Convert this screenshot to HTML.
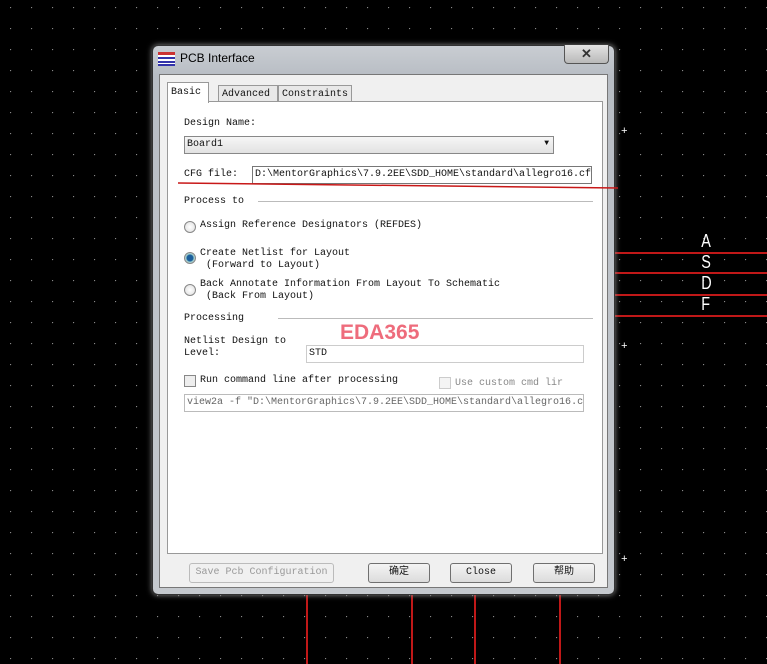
<!DOCTYPE html>
<html><head><meta charset="utf-8"><style>
*{box-sizing:border-box;margin:0;padding:0}
body{width:767px;height:664px;overflow:hidden;background:#000;position:relative;font-family:"Liberation Mono","Noto Sans CJK SC",monospace;font-size:10px;color:#111}
.grid{position:absolute;inset:0;background-image:radial-gradient(circle at 0.5px 0.5px,#888 0.5px,transparent 0.9px);background-size:21px 21px;background-position:10px 7px}
.abs{position:absolute}
.hr{position:absolute;height:2px;background:#c01818}
.vr{position:absolute;width:2px;background:#c01818}
.win{position:absolute;left:152px;top:45px;width:463px;height:550px;background:linear-gradient(#c9cdd2,#b8bdc4 30px,#c5c9ce);border:1px solid #333;border-radius:6px;box-shadow:0 0 6px #888}
.client{position:absolute;left:6px;top:28px;width:449px;height:514px;background:#f0f0f0;border:1px solid #777}
.panel{position:absolute;left:7px;top:26px;width:436px;height:453px;background:#fff;border:1px solid #999}
.tab{position:absolute;background:#e8e8e8;border:1px solid #999;border-bottom:none;height:17px;padding:3px 3px 0;font-size:10px;white-space:nowrap}
.lbl{position:absolute;font-size:10px;white-space:nowrap}
.inp{position:absolute;background:#fff;border:1px solid #aaa;font-size:10px;padding:2px 2px;white-space:nowrap;overflow:hidden;height:18px}
.sep{position:absolute;height:1px;background:#bbb}
.radio{position:absolute;width:12px;height:12px;border-radius:50%;border:1px solid #888;background:radial-gradient(circle,#fff,#ddd)}
.chk{position:absolute;width:12px;height:12px;border:1px solid #888;background:#eee}
.btn{position:absolute;height:20px;border:1px solid #707070;border-radius:3px;background:linear-gradient(#f4f4f4,#dcdcdc);text-align:center;line-height:18px;font-size:10px;white-space:nowrap}
</style></head><body>
<div class="grid"></div>
<div class="hr" style="left:615px;top:252px;width:152px"></div>
<div class="hr" style="left:615px;top:272px;width:152px"></div>
<div class="hr" style="left:615px;top:294px;width:152px"></div>
<div class="hr" style="left:615px;top:315px;width:152px"></div>
<div class="abs" style="left:700px;top:231px;color:#fff;font-family:'Liberation Sans',sans-serif;font-size:18px;line-height:21px;transform:scaleX(.8)">A<br>S<br>D<br>F</div>
<div class="vr" style="left:306px;top:595px;height:69px"></div>
<div class="vr" style="left:411px;top:595px;height:69px"></div>
<div class="vr" style="left:474px;top:595px;height:69px"></div>
<div class="vr" style="left:559px;top:595px;height:69px"></div>
<div class="abs" style="left:621px;top:126px;color:#fff;font-size:11px">+</div>
<div class="abs" style="left:621px;top:341px;color:#fff;font-size:11px">+</div>
<div class="abs" style="left:621px;top:554px;color:#fff;font-size:11px">+</div>
<div class="win">
 <div class="abs" style="left:5px;top:6px;width:17px;height:14px;background:linear-gradient(#c33 0 3px,#fff 3px 5px,#33a 5px 7px,#fff 7px 9px,#33a 9px 11px,#fff 11px 12px,#33a 12px)"></div>
 <div class="abs" style="left:27px;top:5px;font-family:'Liberation Sans',sans-serif;font-size:12px;color:#000">PCB Interface</div>
 <div class="abs" style="left:411px;top:-1px;width:45px;height:19px;border:1px solid #555;border-top:none;border-radius:0 0 4px 4px;background:linear-gradient(#e3e3e3,#b9b9b9);color:#333;text-align:center;font:bold 13px 'Liberation Sans',sans-serif;line-height:17px">✕</div>
 <div class="client">
  <div class="tab" style="left:7px;top:7px;height:21px;background:#fff;z-index:2;padding-top:4px;width:42px">Basic</div>
  <div class="tab" style="left:58px;top:10px;width:60px">Advanced</div>
  <div class="tab" style="left:118px;top:10px;width:74px">Constraints</div>
  <div class="panel">
   <div class="lbl" style="left:16px;top:16px">Design Name:</div>
   <div class="inp" style="left:16px;top:34px;width:370px;background:linear-gradient(#f6f6f6,#e2e2e2);border-color:#888">Board1<span style="position:absolute;right:4px;top:2px;font-size:8px">▼</span></div>
   <div class="lbl" style="left:16px;top:67px">CFG file:</div>
   <div class="inp" style="left:84px;top:64px;width:340px;border-color:#777">D:\MentorGraphics\7.9.2EE\SDD_HOME\standard\allegro16.cf</div>
   <div class="lbl" style="left:16px;top:94px">Process to</div>
   <div class="sep" style="left:90px;top:99px;width:335px"></div>
   <div class="radio" style="left:16px;top:119px"></div>
   <div class="lbl" style="left:32px;top:118px">Assign Reference Designators (REFDES)</div>
   <div class="radio" style="left:16px;top:150px;background:radial-gradient(circle,#1b5f9c 0 3px,#9cc 4px,#ddd 6px)"></div>
   <div class="lbl" style="left:32px;top:146px;line-height:12px">Create Netlist for Layout<br>&nbsp;(Forward to Layout)</div>
   <div class="radio" style="left:16px;top:182px"></div>
   <div class="lbl" style="left:32px;top:177px;line-height:12px">Back Annotate Information From Layout To Schematic<br>&nbsp;(Back From Layout)</div>
   <div class="lbl" style="left:16px;top:211px">Processing</div>
   <div class="sep" style="left:110px;top:216px;width:315px"></div>
   <div class="abs" style="left:172px;top:219px;color:#ee6c7c;font:bold 21px 'Liberation Sans',sans-serif">EDA365</div>
   <div class="lbl" style="left:16px;top:234px;line-height:12px">Netlist Design to<br>Level:</div>
   <div class="inp" style="left:138px;top:243px;width:278px;border-color:#ccc">STD</div>
   <div class="chk" style="left:16px;top:273px"></div>
   <div class="lbl" style="left:32px;top:273px">Run command line after processing</div>
   <div class="chk" style="left:271px;top:275px;border-color:#ccc;background:#f4f4f4"></div>
   <div class="lbl" style="left:287px;top:276px;color:#888">Use custom cmd lir</div>
   <div class="inp" style="left:16px;top:292px;width:400px;color:#666;border-color:#bbb">view2a -f "D:\MentorGraphics\7.9.2EE\SDD_HOME\standard\allegro16.c</div>
  </div>
  <div class="btn" style="left:29px;top:488px;width:145px;color:#999;border-color:#bbb;background:#f0f0f0">Save Pcb Configuration</div>
  <div class="btn" style="left:208px;top:488px;width:62px">确定</div>
  <div class="btn" style="left:290px;top:488px;width:62px">Close</div>
  <div class="btn" style="left:373px;top:488px;width:62px">帮助</div>
 </div>
</div>
<svg class="abs" style="left:0;top:0" width="767" height="664"><path d="M178 183 Q400 185 618 188" stroke="#c81818" stroke-width="1.5" fill="none"/></svg>
</body></html>
